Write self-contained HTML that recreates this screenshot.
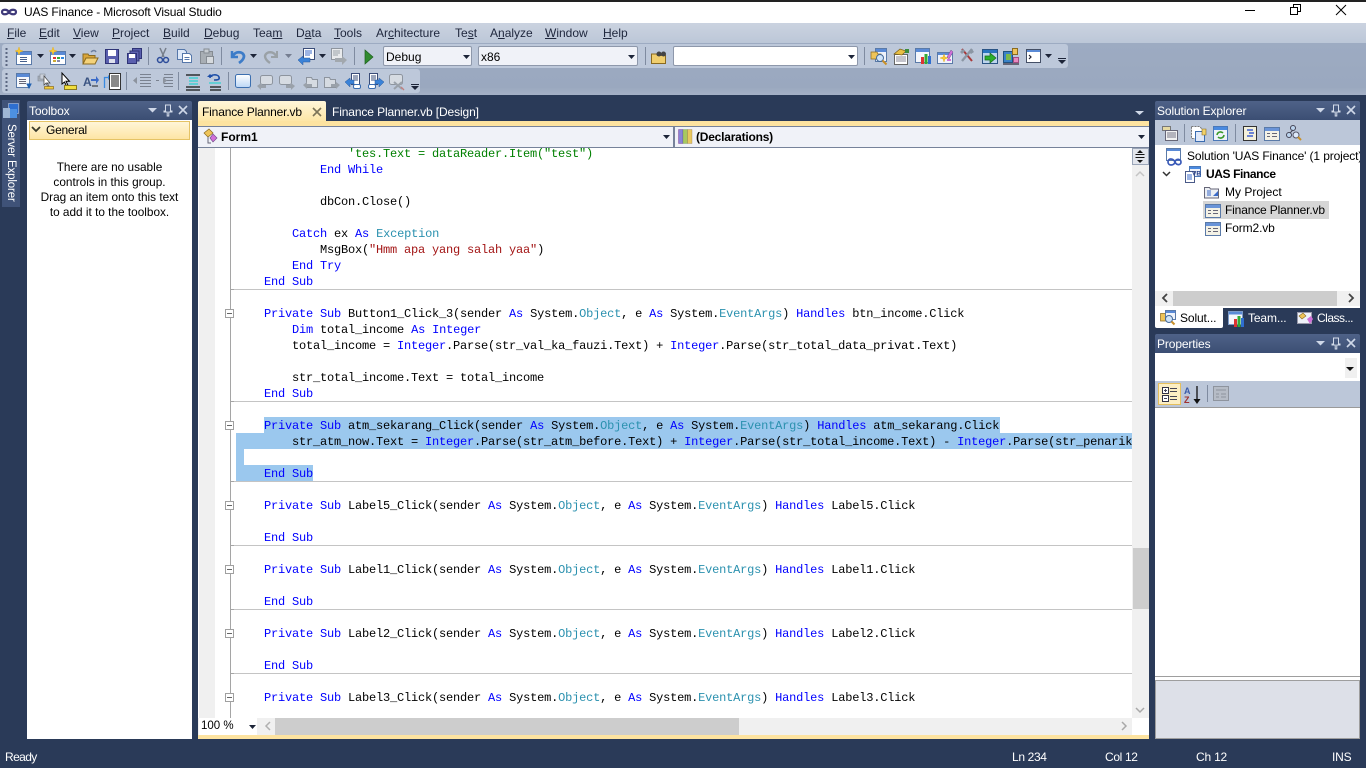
<!DOCTYPE html>
<html><head><meta charset="utf-8"><title>UAS Finance - Microsoft Visual Studio</title>
<style>
html,body{margin:0;padding:0;width:1366px;height:768px;overflow:hidden;background:#2a3a58}
body{position:relative;font:12px "Liberation Sans",sans-serif;color:#000}
.a,.t{position:absolute}
.t{white-space:pre;line-height:16px;letter-spacing:-.12px}
.w{color:#fff}
.m{color:#20283e;font-size:12px;top:25px;letter-spacing:0}
.st{letter-spacing:-.35px}
.hd{position:absolute;height:19px;background:linear-gradient(#4f6288,#3b4e73);border-radius:2px 2px 0 0}
.code{position:absolute;left:0;top:148px;width:1132px;height:570px;overflow:hidden;font:12px/16px "Liberation Mono",monospace;letter-spacing:-.2px;color:#000}
.l{position:absolute;left:264px;white-space:pre;height:16px;line-height:16px;margin-top:1px}
.k{color:#0000ff}.y{color:#2b91af}.s{color:#a31515}.c{color:#008000}
.sep{position:absolute;left:234px;width:898px;height:1px;background:#c4c4c4}
.fb{position:absolute;left:225px;width:7px;height:7px;border:1px solid #a0a0a0;background:#fff}
.fb:after{content:"";position:absolute;left:1px;top:3px;width:5px;height:1px;background:#666}
.sel{position:absolute;background:#9bc8ee}
.combo{position:absolute;background:#f0f2f8;border:1px solid #8e98ab;border-radius:2px;box-sizing:border-box;height:20px;line-height:20px;padding-left:2px;font-size:12px}
</style></head><body>
<!-- chrome -->
<div class="a" style="left:0;top:0;width:1366px;height:2px;background:#222"></div>
<div class="a" style="left:0;top:2px;width:1366px;height:21px;background:#fff"></div>
<div class="a" style="left:0;top:23px;width:1366px;height:20px;background:linear-gradient(#cbd3e0,#bcc7d8)"></div>
<div class="a" style="left:0;top:43px;width:1366px;height:52px;background:linear-gradient(#9dabc2,#9aa8bf 85%,#a5b1c6)"></div>
<div class="a" style="left:2px;top:44px;width:1066px;height:24px;background:#bdc8da;border-radius:3px"></div>
<div class="a" style="left:2px;top:69px;width:418px;height:24px;background:#bdc8da;border-radius:3px"></div>
<div class="t" style="left:24px;top:4px;font-size:12px;letter-spacing:-.15px">UAS Finance - Microsoft Visual Studio</div>

<div class="t m" style="left:7px"><u>F</u>ile</div>
<div class="t m" style="left:39px"><u>E</u>dit</div>
<div class="t m" style="left:73px"><u>V</u>iew</div>
<div class="t m" style="left:112px"><u>P</u>roject</div>
<div class="t m" style="left:163px"><u>B</u>uild</div>
<div class="t m" style="left:204px"><u>D</u>ebug</div>
<div class="t m" style="left:253px">Tea<u>m</u></div>
<div class="t m" style="left:296px">D<u>a</u>ta</div>
<div class="t m" style="left:334px"><u>T</u>ools</div>
<div class="t m" style="left:376px">Ar<u>c</u>hitecture</div>
<div class="t m" style="left:455px">Te<u>s</u>t</div>
<div class="t m" style="left:490px">A<u>n</u>alyze</div>
<div class="t m" style="left:545px"><u>W</u>indow</div>
<div class="t m" style="left:603px"><u>H</u>elp</div>

<div class="combo" style="left:383px;top:46px;width:89px">Debug</div>
<div class="combo" style="left:478px;top:46px;width:160px">x86</div>
<div class="combo" style="left:673px;top:46px;width:185px;background:#fff"></div>

<!-- server explorer -->
<div class="a" style="left:2px;top:100px;width:18px;height:107px;background:#3f5278"></div>
<div class="t w" style="left:3px;top:184px;width:100px;font-size:11.5px;letter-spacing:-.15px;transform-origin:0 0;transform:rotate(90deg) translate(-60px,-16px);">Server Explorer</div>

<!-- toolbox -->
<div class="hd" style="left:27px;top:101px;width:165px"></div>
<div class="a" style="left:27px;top:120px;width:165px;height:619px;background:#fff"></div>
<div class="t w" style="left:29px;top:103px">Toolbox</div>
<div class="a" style="left:29px;top:121px;width:159px;height:17px;background:linear-gradient(#fff6d8,#fde5a4);border:1px solid #e5c365"></div>
<div class="t" style="left:46px;top:122px;letter-spacing:-.25px">General</div>
<div class="a" style="left:27px;top:160px;width:165px;text-align:center;line-height:15px;font-size:11.8px">There are no usable<br>controls in this group.<br>Drag an item onto this text<br>to add it to the toolbox.</div>

<!-- editor tabs -->
<div class="a" style="left:198px;top:101px;width:128px;height:20px;background:linear-gradient(#fff6da,#fde6a6);border-radius:2px 2px 0 0"></div>
<div class="a" style="left:198px;top:121px;width:951px;height:5px;background:#fde3a0"></div>
<div class="t" style="left:202px;top:104px;letter-spacing:-.16px">Finance Planner.vb</div>
<div class="t w" style="left:332px;top:104px">Finance Planner.vb [Design]</div>

<!-- combo bar -->
<div class="a" style="left:198px;top:126px;width:951px;height:22px;background:#f0f2f8;border-top:1px solid #76829a;border-bottom:1px solid #76829a;box-sizing:border-box"></div>
<div class="a" style="left:673px;top:127px;width:2px;height:20px;background:#76829a"></div>
<div class="t" style="left:221px;top:129px;font-weight:bold;letter-spacing:0">Form1</div>
<div class="t" style="left:696px;top:129px;font-weight:bold;letter-spacing:-.22px">(Declarations)</div>

<!-- code -->
<div class="a" style="left:198px;top:148px;width:951px;height:587px;background:#fff"></div>
<div class="a" style="left:199px;top:148px;width:16px;height:570px;background:#f0f0f0"></div>
<div class="a" style="left:230px;top:148px;width:1px;height:570px;background:#a5a5a5"></div>
<div class="code" id="code">
<div class="sel" style="left:264px;top:269px;width:736px;height:16px"></div>
<div class="sel" style="left:236px;top:285px;width:896px;height:16px"></div>
<div class="sel" style="left:236px;top:301px;width:8px;height:16px"></div>
<div class="sel" style="left:236px;top:317px;width:77px;height:16px"></div>
<div class="l c" style="top:-3px">            'tes.Text = dataReader.Item("test")</div>
<div class="l" style="top:13px">        <span class="k">End While</span></div>
<div class="l" style="top:45px">        dbCon.Close()</div>
<div class="l" style="top:77px">    <span class="k">Catch</span> ex <span class="k">As</span> <span class="y">Exception</span></div>
<div class="l" style="top:93px">        MsgBox(<span class="s">"Hmm apa yang salah yaa"</span>)</div>
<div class="l" style="top:109px">    <span class="k">End Try</span></div>
<div class="l k" style="top:125px">End Sub</div>
<div class="l" style="top:157px"><span class="k">Private Sub</span> Button1_Click_3(sender <span class="k">As</span> System.<span class="y">Object</span>, e <span class="k">As</span> System.<span class="y">EventArgs</span>) <span class="k">Handles</span> btn_income.Click</div>
<div class="l" style="top:173px">    <span class="k">Dim</span> total_income <span class="k">As</span> <span class="k">Integer</span></div>
<div class="l" style="top:189px">    total_income = <span class="k">Integer</span>.Parse(str_val_ka_fauzi.Text) + <span class="k">Integer</span>.Parse(str_total_data_privat.Text)</div>
<div class="l" style="top:221px">    str_total_income.Text = total_income</div>
<div class="l k" style="top:237px">End Sub</div>
<div class="l" style="top:269px"><span class="k">Private Sub</span> atm_sekarang_Click(sender <span class="k">As</span> System.<span class="y">Object</span>, e <span class="k">As</span> System.<span class="y">EventArgs</span>) <span class="k">Handles</span> atm_sekarang.Click</div>
<div class="l" style="top:285px">    str_atm_now.Text = <span class="k">Integer</span>.Parse(str_atm_before.Text) + <span class="k">Integer</span>.Parse(str_total_income.Text) - <span class="k">Integer</span>.Parse(str_penarikan.Text)</div>
<div class="l k" style="top:317px">End Sub</div>
<div class="l" style="top:349px"><span class="k">Private Sub</span> Label5_Click(sender <span class="k">As</span> System.<span class="y">Object</span>, e <span class="k">As</span> System.<span class="y">EventArgs</span>) <span class="k">Handles</span> Label5.Click</div>
<div class="l k" style="top:381px">End Sub</div>
<div class="l" style="top:413px"><span class="k">Private Sub</span> Label1_Click(sender <span class="k">As</span> System.<span class="y">Object</span>, e <span class="k">As</span> System.<span class="y">EventArgs</span>) <span class="k">Handles</span> Label1.Click</div>
<div class="l k" style="top:445px">End Sub</div>
<div class="l" style="top:477px"><span class="k">Private Sub</span> Label2_Click(sender <span class="k">As</span> System.<span class="y">Object</span>, e <span class="k">As</span> System.<span class="y">EventArgs</span>) <span class="k">Handles</span> Label2.Click</div>
<div class="l k" style="top:509px">End Sub</div>
<div class="l" style="top:541px"><span class="k">Private Sub</span> Label3_Click(sender <span class="k">As</span> System.<span class="y">Object</span>, e <span class="k">As</span> System.<span class="y">EventArgs</span>) <span class="k">Handles</span> Label3.Click</div>
</div>
<div class="sep" style="top:289px"></div><div class="sep" style="top:401px"></div><div class="sep" style="top:481px"></div><div class="sep" style="top:545px"></div><div class="sep" style="top:609px"></div><div class="sep" style="top:673px"></div>
<div class="a" style="left:230px;top:289px;width:4px;height:1px;background:#a5a5a5"></div>
<div class="a" style="left:230px;top:401px;width:4px;height:1px;background:#a5a5a5"></div>
<div class="a" style="left:230px;top:481px;width:4px;height:1px;background:#a5a5a5"></div>
<div class="a" style="left:230px;top:545px;width:4px;height:1px;background:#a5a5a5"></div>
<div class="a" style="left:230px;top:609px;width:4px;height:1px;background:#a5a5a5"></div>
<div class="a" style="left:230px;top:673px;width:4px;height:1px;background:#a5a5a5"></div>
<div class="fb" style="top:309px"></div><div class="fb" style="top:421px"></div><div class="fb" style="top:501px"></div><div class="fb" style="top:565px"></div><div class="fb" style="top:629px"></div><div class="fb" style="top:693px"></div>

<!-- v scroll -->
<div class="a" style="left:1132px;top:148px;width:17px;height:570px;background:#f0f0f0"></div>
<div class="a" style="left:1132px;top:148px;width:17px;height:17px;background:#e2e5ec;border:1px solid #9aa5b8;box-sizing:border-box"></div>
<div class="a" style="left:1133px;top:548px;width:16px;height:61px;background:#cdcdcd"></div>
<!-- h scroll -->
<div class="a" style="left:198px;top:718px;width:934px;height:17px;background:#f0f0f0"></div>
<div class="a" style="left:199px;top:718px;width:58px;height:17px;background:#fff"></div>
<div class="t" style="left:201px;top:718px;font-size:11.5px;letter-spacing:0">100 %</div>
<div class="a" style="left:275px;top:718px;width:464px;height:17px;background:#cdcdcd"></div>
<div class="a" style="left:198px;top:735px;width:951px;height:4px;background:#fde3a0"></div>

<!-- solution explorer -->
<div class="hd" style="left:1155px;top:101px;width:205px"></div>
<div class="t w" style="left:1157px;top:103px">Solution Explorer</div>
<div class="a" style="left:1155px;top:120px;width:205px;height:25px;background:#bcc7d9"></div>
<div class="a" style="left:1155px;top:145px;width:205px;height:163px;background:#fff;overflow:hidden"></div>
<div class="a" style="left:1203px;top:201px;width:126px;height:18px;background:#d6d6d6"></div>
<div class="a" style="left:1155px;top:145px;width:205px;height:110px;overflow:hidden">
<div class="t" style="left:32px;top:3px">Solution 'UAS Finance' (1 project)</div>
<div class="t" style="left:51px;top:21px;font-weight:bold;letter-spacing:-.4px">UAS Finance</div>
<div class="t" style="left:70px;top:39px;letter-spacing:0">My Project</div>
<div class="t" style="left:70px;top:57px;letter-spacing:-.16px">Finance Planner.vb</div>
<div class="t" style="left:70px;top:75px">Form2.vb</div>
</div>
<div class="a" style="left:1155px;top:291px;width:205px;height:15px;background:#f0f0f0"></div>
<div class="a" style="left:1173px;top:291px;width:164px;height:15px;background:#cdcdcd"></div>
<div class="a" style="left:1155px;top:308px;width:68px;height:20px;background:#fff;border-radius:0 0 2px 2px"></div>
<div class="t" style="left:1180px;top:310px">Solut...</div>
<div class="t w" style="left:1248px;top:310px">Team...</div>
<div class="t w" style="left:1317px;top:310px;letter-spacing:-.5px">Class...</div>

<!-- properties -->
<div class="hd" style="left:1155px;top:334px;width:205px"></div>
<div class="t w" style="left:1157px;top:336px">Properties</div>
<div class="a" style="left:1155px;top:353px;width:205px;height:386px;background:#fff"></div>
<div class="a" style="left:1345px;top:358px;width:12px;height:20px;background:#f0f0f0"></div>
<div class="a" style="left:1155px;top:381px;width:205px;height:26px;background:#bcc7d9;border-bottom:1px solid #9a9a9a;box-sizing:content-box"></div>
<div class="a" style="left:1155px;top:676px;width:205px;height:1px;background:#9e9e9e"></div>
<div class="a" style="left:1155px;top:680px;width:203px;height:57px;background:#dde0e8;border:1px solid #9e9e9e"></div>

<!-- status -->
<div class="t w st" style="left:5px;top:749px;letter-spacing:-.6px">Ready</div>
<div class="t w st" style="left:1012px;top:749px">Ln 234</div>
<div class="t w st" style="left:1105px;top:749px">Col 12</div>
<div class="t w st" style="left:1196px;top:749px;letter-spacing:-.2px">Ch 12</div>
<div class="t w st" style="left:1332px;top:749px;letter-spacing:-.2px">INS</div>

<svg class="a" style="left:0;top:0" width="1366" height="768" viewBox="0 0 1366 768">
<defs>
<path id="dn" d="M0 0h7l-3.500 4z" fill="#1c2438"/>
<g id="star"><path d="M4 0l1 3 3 1-3 1-1 3-1-3-3-1 3-1z" fill="#f5c93a" stroke="#e8b020" stroke-width=".5"/></g>
<g id="win"><rect x=".5" y="2.500" width="15" height="13" fill="#fff" stroke="#5a7aa8"/><rect x="1" y="3" width="14" height="3" fill="#5a8ad6"/></g>
<g id="lines"><rect x=".5" y="2.500" width="15" height="13" fill="#f4f2e6" stroke="#5a7aa8"/><rect x="1" y="3" width="14" height="3" fill="#6a94d8"/><path d="M3 8.500h3M3 11.500h3M8 8.500h5M8 11.500h5" stroke="#667"/></g>
<g id="bub"><rect x="3.500" y="1.500" width="12" height="9" rx="2" fill="#d6dbe2" stroke="#8d949e"/><path d="M0 12l4-3v2h5v3h-5v2z" fill="#9aa1aa"/></g>
<g id="bub2"><rect x=".5" y="1.500" width="12" height="9" rx="2" fill="#d6dbe2" stroke="#8d949e"/><path d="M16 12l-4-3v2h-5v3h5v2z" fill="#9aa1aa"/></g>
<g id="fld"><path d="M3.500 3.500h5l1 2h5v8h-11z" fill="#d6dbe2" stroke="#8d949e"/><path d="M0 11l4-3v2h5v3h-5v2z" fill="#9aa1aa"/></g>
<g id="fld2"><path d="M.5 3.500h5l1 2h5v8h-11z" fill="#d6dbe2" stroke="#8d949e"/><path d="M16 11l-4-3v2h-5v3h5v2z" fill="#9aa1aa"/></g>
<g id="pin"><path d="M-2.500 0h5v6h1.500v1h-3.200v4h-1.600v-4h-3.200v-1h1.500z" fill="none" stroke="#d4dcea" stroke-width="1"/></g>
<g id="paneX"><path d="M0 0l8 8M8 0l-8 8" stroke="#cfd8e8" stroke-width="1.600"/></g>
<path id="paneDn" d="M0 0h9l-4.500 4.500z" fill="#cfd8e8"/>
<g id="dots"><path d="M6.500 0v2M6.500 4v2M6.500 8v2M6.500 12v2M6.500 16v2" stroke="#5a6680" stroke-width="2"/></g>
</defs>

<!-- logo -->
<path d="M7 12c0-3 5-3 7 0s7 3 7 0-5-3-7 0-7 3-7 0z" transform="translate(-5 0)" fill="none" stroke="#3f3a7a" stroke-width="2.200"/>
<!-- window controls -->
<path d="M1245 10.500h10" stroke="#000"/>
<path d="M1290.500 7.500h7v7h-7zM1293.500 7.500v-3h7v7h-3" fill="none" stroke="#000"/>
<path d="M1336 5l10 10M1346 5l-10 10" stroke="#000" stroke-width="1"/>

<!-- grips and separators -->
<use href="#dots" x="0" y="48"/><use href="#dots" x="0" y="73"/>
<path d="M148.500 47v18M221.500 47v18M354.500 47v18M645.500 47v18M864.500 47v18M126.500 72v18M178.500 72v18M228.500 72v18" stroke="#7f8ba0"/>

<!-- row 1 -->
<g transform="translate(16 49)"><use href="#win"/><path d="M4 8.500h7M4 10.500h7M4 12.500h7" stroke="#46608c"/><use href="#star" x="-1" y="-2"/></g>
<use href="#dn" x="37" y="54"/>
<g transform="translate(50 49)"><use href="#win"/><rect x="3" y="8" width="3" height="2" fill="#d33"/><rect x="7" y="8" width="3" height="2" fill="#3a3"/><rect x="11" y="8" width="3" height="2" fill="#38d"/><rect x="3" y="11" width="3" height="2" fill="#ca3"/><rect x="7" y="11" width="3" height="2" fill="#88a"/><use href="#star" x="-1" y="-2"/></g>
<use href="#dn" x="69" y="54"/>
<g transform="translate(82 48)"><path d="M1 16V6h5l1 1.500h6V16z" fill="#d9a53a" stroke="#8a6a20"/><path d="M1 16l3-6h12l-3 6z" fill="#f4d27a" stroke="#8a6a20"/><path d="M9 4c2-2 4-2 5 0" fill="none" stroke="#6d7fa0" stroke-width="1.400"/></g>
<g transform="translate(105 48)"><rect x=".5" y="1.500" width="13" height="14" fill="#5a5fae" stroke="#2f3476"/><rect x="3" y="2" width="8" height="6" fill="#fff"/><rect x="4" y="11" width="6" height="4" fill="#dfe2ee"/></g>
<g transform="translate(127 48)"><rect x="5.500" y=".5" width="9" height="10" fill="#5a5fae" stroke="#2f3476"/><rect x="3" y="3" width="9" height="10" fill="#5f64b0" stroke="#2f3476"/><rect x=".5" y="5.500" width="9" height="10" fill="#5a5fae" stroke="#2f3476"/><rect x="2" y="6" width="6" height="4" fill="#fff"/></g>
<g transform="translate(156 47)" fill="none"><path d="M4 1l4 9M10 1l-4 9" stroke="#767e8a" stroke-width="1.500"/><circle cx="4" cy="13" r="2.500" stroke="#2c4c9a" stroke-width="1.500"/><circle cx="10" cy="13" r="2.500" stroke="#2c4c9a" stroke-width="1.500"/></g>
<g transform="translate(177 48)"><path d="M.5 1.500h7l2 2v8h-9z" fill="#dde8f8" stroke="#5577aa"/><path d="M5.500 5.500h7l2 2v7h-9z" fill="#fff" stroke="#5577aa"/><path d="M7.500 9.500h5M7.500 11.500h5" stroke="#5577aa"/></g>
<g transform="translate(199 48)"><rect x="1.500" y="3.500" width="12" height="12" fill="#a8aeb4" stroke="#858b92"/><rect x="5" y="1" width="5" height="4" fill="#c8cdd2" stroke="#858b92"/><rect x="7.500" y="8.500" width="7" height="7" fill="#d6dade" stroke="#858b92"/></g>
<g transform="translate(230 48)"><path d="M2 3v6h6" fill="none" stroke="#3d7cc8" stroke-width="2.500"/><path d="M3 8c2-5 10-5 11 0 0 3-2 5-5 7" fill="none" stroke="#3d7cc8" stroke-width="2.800"/></g>
<use href="#dn" x="250" y="54"/>
<g transform="translate(263 48)"><path d="M14 3v6h-6" fill="none" stroke="#9aa1a6" stroke-width="2"/><path d="M13 8c-2-5-10-5-11 0 0 3 2 5 5 7" fill="none" stroke="#9aa1a6" stroke-width="2.400"/></g>
<use href="#dn" x="285" y="54" opacity=".45"/>
<g transform="translate(298 48)"><rect x="5.500" y=".5" width="11" height="11" fill="#fff" stroke="#3a4c78"/><path d="M7 3h7M7 5h7M7 7h5" stroke="#3a6ac8"/><path d="M0 12l5-4v2h7v4h-7v3z" fill="#3a82d8" stroke="#2a5a9c" stroke-width=".5"/></g>
<use href="#dn" x="319" y="54"/>
<g transform="translate(331 48)"><rect x=".5" y=".5" width="11" height="11" fill="#e8eaec" stroke="#8e959e"/><path d="M2 3h7M2 5h7M2 7h5" stroke="#9aa1a8"/><path d="M16 12l-5-4v2h-7v4h7v3z" fill="#a2a8ae"/></g>
<path d="M365 50l8 7-8 7z" fill="#2f8a2f" stroke="#1b5e1b" stroke-width=".7"/>
<path d="M463 55h7l-3.500 4zM628 55h7l-3.500 4zM848 55h7l-3.500 4z" fill="#1c2438"/>
<g transform="translate(651 49)"><path d="M.5 14.500V5h5l1 1.500h8v8z" fill="#f0ce6e" stroke="#8a6a20"/><circle cx="8" cy="5" r="2.500" fill="#444"/><circle cx="12.500" cy="5" r="2.500" fill="#444"/></g>
<g transform="translate(871 48)"><rect x="4.500" y=".5" width="11" height="13" fill="#eef2fa" stroke="#5a7aa8"/><rect x="5" y="1" width="10" height="3" fill="#5a8ad6"/><path d="M0 4h6l1 2h3v5H0z" fill="#eec45a" stroke="#8a6a20" stroke-width=".7"/><circle cx="9" cy="10" r="3.500" fill="#cfe4fa" stroke="#456a9a"/><path d="M11.500 12.500l4 4" stroke="#c9902a" stroke-width="2"/></g>
<g transform="translate(893 48)"><rect x="1.500" y="6.500" width="13" height="10" fill="#fff" stroke="#666"/><path d="M3 9h10M3 11h10M3 13h10" stroke="#889"/><path d="M1 6l6-5 6 2-4 4z" fill="#e8bf44" stroke="#7a5e18" stroke-width=".7"/><rect x="12" y="1" width="4" height="4" fill="#3c8c3c"/></g>
<g transform="translate(915 48)"><rect x=".5" y=".5" width="14" height="14" fill="#f4f6fb" stroke="#5a7aa8"/><rect x="1" y="1" width="13" height="3" fill="#5a8ad6"/><rect x="6" y="9" width="3" height="7" fill="#d33"/><rect x="9.500" y="6" width="3" height="10" fill="#3a3"/><rect x="13" y="8" width="3" height="8" fill="#2f6ed0"/></g>
<g transform="translate(937 49)"><rect x=".5" y="3.500" width="15" height="11" fill="#f0f3fa" stroke="#5a7aa8"/><rect x="1" y="4" width="14" height="2" fill="#5a8ad6"/><use href="#star" x="3" y="5"/><path d="M10 8l4-7 2 2-4 7z" fill="#d070d8" stroke="#74508c" stroke-width=".5"/><path d="M10 11h4" stroke="#d070d8" stroke-width="2"/></g>
<g transform="translate(959 48)"><path d="M3 1l10 12" stroke="#a83a3a" stroke-width="2"/><path d="M13 1l-10 12" stroke="#8b96a4" stroke-width="2.400"/><path d="M1 4l3-3 2 2-3 3zM15 4l-2-3-3 3 2 2z" fill="#8b96a4"/></g>
<g transform="translate(982 49)"><rect x=".5" y=".5" width="15" height="14" fill="#bcd4ee" stroke="#2a5484"/><rect x="1" y="1" width="14" height="3" fill="#2a74c0"/><path d="M3 7h5V4l6 5-6 5v-3H3z" fill="#2cb02c" stroke="#1a6a1a" stroke-width=".7"/></g>
<g transform="translate(1003 48)"><rect x=".5" y="3.500" width="9" height="11" fill="#3a82c8" stroke="#22527e"/><rect x="3" y="6" width="5" height="6" fill="#7ab84c"/><rect x="9.500" y=".5" width="5" height="6" fill="#eec45a" stroke="#8a6a20"/><rect x="10.500" y="9.500" width="5" height="5" fill="#e88ac0" stroke="#a04c80"/><rect x="0" y="15" width="16" height="2" fill="#667"/></g>
<g transform="translate(1026 49)"><rect x=".5" y=".5" width="14" height="13" fill="#fff" stroke="#444f66"/><rect x="1" y="1" width="13" height="2" fill="#5a8ad6"/><path d="M3 6l2 2-2 2" fill="none" stroke="#223" stroke-width="1.200"/></g>
<use href="#dn" x="1045" y="54"/>
<path d="M1058 58.500h8" stroke="#1c2438"/><path d="M1058 60h8l-4 4z" fill="#1c2438"/>

<!-- row 2 -->
<g transform="translate(16 73)"><rect x=".5" y=".5" width="13" height="14" fill="#f6f8fc" stroke="#5a7aa8"/><rect x="1" y="1" width="12" height="3" fill="#5a8ad6"/><path d="M3 6.500h7M3 8.500h7M3 10.500h7" stroke="#667"/><path d="M11 11h4l-2 4z" fill="#2060b0" stroke="#2060b0" stroke-width="1"/></g>
<g transform="translate(38 73)"><path d="M0 3h6v5H0z" fill="#a8b0bc" stroke="#7f8690" stroke-width=".6"/><path d="M2 1h5v5H2z" fill="#cad0da" stroke="#7f8690" stroke-width=".6"/><path d="M6 3v9l2-2 2 4 1-1-2-3h3z" fill="#fff" stroke="#444" stroke-width=".7"/><rect x="6.500" y="13.500" width="9" height="2.500" fill="#f1ce3e" stroke="#8a6a20" stroke-width=".7"/></g>
<g transform="translate(61 73)"><path d="M1 0v11l2.500-2 2 4 1.500-.7-2-4h3.500z" fill="#fff" stroke="#000" stroke-width="1"/><rect x="3.500" y="12.500" width="12" height="4" fill="#f1de3e" stroke="#8a7a20"/></g>
<g transform="translate(83 75)" font-family="Liberation Sans, sans-serif"><text x="0" y="11" font-size="12" font-weight="bold" fill="#3b5482">A</text><path d="M8 7h5V4l3 4-3 4V9H8z" fill="#3a6ac8" transform="translate(0 -3)"/><path d="M9 10h6" stroke="#222" transform="translate(0 1)"/></g>
<g transform="translate(104 73)"><path d="M.5 15V4.500H5" fill="none" stroke="#3a8ae0" stroke-width="1.300"/><path d="M4 2l3 2.500L4 7z" fill="#3a8ae0"/><rect x="5.500" y=".5" width="11" height="16" fill="#fff" stroke="#333"/><path d="M7 3h8M7 5h8M7 7h8M7 9h8M7 11h8M7 13h8" stroke="#111"/></g>
<path d="M134 80.500h3M140 74.500h11M140 77.500h11M140 80.500h11M140 83.500h11M140 86.500h11M156 80.500h3M164 74.500h9M164 77.500h9M164 80.500h9M164 83.500h9M164 86.500h9" stroke="#7a8290"/>
<path d="M137 77v7l-4-3.500zM163 77v7l4-3.500z" fill="#8c939e"/>
<path d="M186 75h14M186 87h14M186 90h14" stroke="#111" stroke-width="1.200"/><path d="M189 78h9M189 81h9M189 84h9" stroke="#2ad2d2" stroke-width="1.200"/>
<path d="M210 90h11M210 87h11" stroke="#111" stroke-width="1.200"/><path d="M209 83h12" stroke="#2ad2d2" stroke-width="1.200"/><path d="M210 78c0-4 8-4 9-1s-2 3-5 3" fill="none" stroke="#1e4fa8" stroke-width="1.600"/><path d="M207 77h6l-3-3z" fill="#1e4fa8"/>
<rect x="235.500" y="74.500" width="15" height="13" rx="2" fill="url(#g1)" stroke="#3c6fb0"/>
<linearGradient id="g1" x1="0" y1="0" x2="0" y2="1"><stop offset="0" stop-color="#fff"/><stop offset="1" stop-color="#bcd6f6"/></linearGradient>
<use href="#bub" x="257" y="74"/><use href="#bub2" x="279" y="74"/><use href="#fld" x="303" y="74"/><use href="#fld2" x="324" y="74"/>
<g transform="translate(345 73)"><rect x="6.500" y=".5" width="8" height="11" fill="#fff" stroke="#3a4c78"/><path d="M8 3h5M8 5h5M8 7h5" stroke="#3a4c78"/><path d="M0 9l5-4v2h4v4H5v3z" fill="#3a82d8" stroke="#2a5a9c" stroke-width=".5"/><rect x="8.500" y="11.500" width="7" height="4" rx="1.500" fill="#fff" stroke="#3a6cb0"/></g>
<g transform="translate(368 73)"><rect x="1.500" y=".5" width="8" height="11" fill="#fff" stroke="#3a4c78"/><path d="M3 3h5M3 5h5M3 7h5" stroke="#3a4c78"/><path d="M16 9l-5-4v2H7v4h4v3z" fill="#3a82d8" stroke="#2a5a9c" stroke-width=".5"/><rect x=".5" y="11.500" width="7" height="4" rx="1.500" fill="#fff" stroke="#3a6cb0"/></g>
<g transform="translate(389 73)"><rect x=".5" y="1.500" width="13" height="10" rx="2" fill="#d6dbe2" stroke="#8d949e"/><path d="M5 9l8 7M13 9l-8 7" stroke="#9aa1aa" stroke-width="2"/><path d="M12 14l3 3" stroke="#c08080" stroke-width="1.400"/></g>
<path d="M411 84.500h8" stroke="#1c2438"/><path d="M411 86h8l-4 4z" fill="#1c2438"/>

<!-- server explorer icon -->
<g transform="translate(3 103)"><rect x="5.500" y=".5" width="10" height="10" fill="#2e6fd0" stroke="#cfd8e8" stroke-width=".5"/><rect x="0" y="5" width="7" height="10" fill="#9fb6d4"/><rect x="7" y="6" width="7" height="9" fill="#4d90e0"/></g>

<!-- pane header buttons -->
<use href="#paneDn" x="148" y="108"/><use href="#pin" x="168" y="105"/><use href="#paneX" x="179" y="106"/>
<use href="#paneDn" x="1316" y="108"/><use href="#pin" x="1336" y="105"/><use href="#paneX" x="1347" y="106"/>
<use href="#paneDn" x="1316" y="341"/><use href="#pin" x="1336" y="338"/><use href="#paneX" x="1347" y="339"/>
<path d="M32 127l4 4 4-4" fill="none" stroke="#3a3a2a" stroke-width="1.800"/>

<!-- tab close, dropdown -->
<path d="M313 108l8 8M321 108l-8 8" stroke="#7c7458" stroke-width="1.600"/>
<path d="M1135 111h9l-4.500 4z" fill="#cfd8e8"/>

<!-- combo bar icons -->
<g transform="translate(204 128)"><path d="M0 5l5-4 4 4-5 4z" fill="#eec45a" stroke="#8a6a20" stroke-width=".7"/><path d="M9 6l4 4-4 4-3-4z" fill="#d070d8" stroke="#74508c" stroke-width=".7"/><path d="M4 9v6h3" fill="none" stroke="#667"/></g>
<g transform="translate(678 128)"><rect x=".5" y="1.500" width="4.500" height="14" fill="#8884d8" stroke="#606"  stroke-width=".3"/><rect x="5" y="1.500" width="4.500" height="14" fill="#a8c860" stroke="#585" stroke-width=".3"/><rect x="9.500" y="1.500" width="4.500" height="14" fill="#e8c860" stroke="#864" stroke-width=".3"/></g>
<path d="M663 135h7l-3.500 4zM1138 135h7l-3.500 4z" fill="#1c2438"/>

<!-- editor scrollbars -->
<path d="M1135.500 154.500h9M1135.500 157.500h9" stroke="#111"/><path d="M1140 150l3 3h-6zM1140 163l3-3h-6z" fill="#111"/>
<path d="M1136 176l4-4 4 4" fill="none" stroke="#c4c4c4" stroke-width="1.500"/>
<path d="M1136 708l4 4 4-4" fill="none" stroke="#a8a8a8" stroke-width="1.500"/>
<path d="M270 722l-4 4 4 4" fill="none" stroke="#b0b0b0" stroke-width="1.500"/>
<path d="M1122 722l4 4-4 4" fill="none" stroke="#a8a8a8" stroke-width="1.500"/>
<path d="M249 725h7l-3.500 4z" fill="#1c2438"/>

<!-- solution explorer toolbar -->
<g transform="translate(1162 125)"><path d="M.5 1.500h8v4h-8z" fill="#e6d9a2" stroke="#777"/><rect x="3.500" y="5.500" width="12" height="10" fill="#f2f2f2" stroke="#667"/><path d="M5 8h9M5 10h9M5 12h9" stroke="#778"/></g>
<path d="M1184.500 124v18M1235.500 124v18" stroke="#7f8ba0"/>
<g transform="translate(1191 126)"><path d="M.5 .5h8l3 3v9h-11z" fill="#fff" stroke="#777" stroke-dasharray="2 1"/><path d="M4.500 5.500h7l2 2v8h-9z" fill="#dfe8f8" stroke="#3a6cb0"/><path d="M11 3h4v6h-4z" fill="#f1d26a" stroke="#8a6a20" stroke-width=".6"/></g>
<g transform="translate(1213 126)"><rect x=".5" y=".5" width="14" height="14" fill="#eef2fa" stroke="#4a78b8"/><rect x="1" y="1" width="13" height="3" fill="#4a8ae0"/><path d="M4 9a3.500 3.500 0 0 1 6-2M11 9a3.500 3.500 0 0 1-6 2" fill="none" stroke="#3a9a2a" stroke-width="1.600"/></g>
<g transform="translate(1243 126)"><rect x=".5" y=".5" width="13" height="14" fill="#f4f1dc" stroke="#333"/><path d="M4 4h6M6 7h5M4 10h6" stroke="#1a44d0" stroke-width="1.200"/></g>
<g transform="translate(1264 125)"><use href="#lines"/></g>
<g transform="translate(1286 125)"><circle cx="7" cy="3" r="2.500" fill="#bcd4ee" stroke="#445"/><circle cx="3" cy="10" r="2.500" fill="#bcd4ee" stroke="#445"/><path d="M7 5l-3 3" stroke="#445"/><circle cx="10" cy="10" r="3" fill="#dfeafa" stroke="#556"/><path d="M12 12l3 3" stroke="#c9902a" stroke-width="2"/></g>

<!-- tree icons -->
<path d="M1163 172l3.500 3.500 3.500-3.500" fill="none" stroke="#333" stroke-width="1.500"/>
<g transform="translate(1166 148)"><rect x=".5" y=".5" width="14" height="12" fill="#fff" stroke="#5a7aa8"/><rect x="1" y="1" width="13" height="2" fill="#5a8ad6"/><path d="M2 14c0-4 5-4 7 0s6 3 6 0-5-4-6 0-7 4-7 0z" fill="none" stroke="#3a5ab8" stroke-width="1.700"/></g>
<g transform="translate(1185 166)"><rect x="4.500" y=".5" width="11" height="10" fill="#eef2fa" stroke="#4a78b8"/><rect x="5" y="1" width="10" height="2" fill="#4a8ae0"/><rect x=".5" y="5.500" width="9" height="11" fill="#fff" stroke="#4a5a88"/><text x="7" y="9.500" font-size="6.500" font-weight="bold" fill="#27408a" font-family="Liberation Sans, sans-serif">VB</text><path d="M2 9h5M2 11h5M2 13h5" stroke="#3a6ac8"/></g>
<g transform="translate(1204 185)"><path d="M.5 13V2.500h5l1 1.500h8v9z" fill="#eceff4" stroke="#667"/><path d="M3 6h4M3 8h4M3 10h4" stroke="#3a6ac8"/><path d="M9 11l5-5v5z" fill="#3a6ac8"/></g>
<g transform="translate(1205 202)"><use href="#lines"/></g>
<g transform="translate(1205 220)"><use href="#lines"/></g>

<!-- sol scrollbar -->
<path d="M1167 294l-4 4 4 4" fill="none" stroke="#444" stroke-width="1.800"/>
<path d="M1349 294l4 4-4 4" fill="none" stroke="#444" stroke-width="1.800"/>

<!-- bottom tab icons -->
<g transform="translate(1160 310)"><path d="M.5 3.500h6l1 1.500h3v6h-10z" fill="#eec45a" stroke="#8a6a20" stroke-width=".7"/><rect x="5.500" y=".5" width="10" height="9" fill="#f0f4fb" stroke="#5a7aa8"/><rect x="6" y="1" width="9" height="2" fill="#5a8ad6"/><circle cx="9" cy="9" r="3.500" fill="#cfe4fa" stroke="#456a9a"/><path d="M11.500 11.500l3 3" stroke="#c9902a" stroke-width="2"/></g>
<g transform="translate(1228 311)"><rect x=".5" y=".5" width="14" height="13" fill="#f4f6fb" stroke="#7a9ac8"/><rect x="1" y="1" width="13" height="2.500" fill="#5a8ad6"/><rect x="6" y="8" width="3" height="8" fill="#d33"/><rect x="9.500" y="5" width="3" height="11" fill="#3a3"/><rect x="13" y="7" width="3" height="9" fill="#2f6ed0"/></g>
<g transform="translate(1297 310)"><rect x=".5" y="2.500" width="14" height="11" fill="#eef2fa" stroke="#99a"/><path d="M2 6l4-3 3 3-4 3z" fill="#eec45a" stroke="#8a6a20" stroke-width=".6"/><path d="M10 9l4-3 2 3-3 5z" fill="#d070d8"/></g>

<!-- properties toolbar -->
<path d="M1346 367h8l-4 4z" fill="#111"/>
<rect x="1158.500" y="383.500" width="22" height="21" fill="#fbeec4" stroke="#e5bf5c"/>
<path d="M1162.500 387.500h6v6h-6zM1162.500 395.500h6v6h-6z" fill="#fff" stroke="#334"/><path d="M1164 390.500h3M1165.500 389v3M1164 398.500h3M1170 388.500h7M1170 391.500h7M1170 396.500h7M1170 399.500h7" stroke="#445"/>
<text x="1184" y="394" font-size="9" font-weight="bold" fill="#3a5aa8" font-family="Liberation Sans, sans-serif">A</text><text x="1184" y="403" font-size="9" font-weight="bold" fill="#a03030" font-family="Liberation Sans, sans-serif">Z</text>
<path d="M1197 386v15" stroke="#111" stroke-width="1.300"/><path d="M1193.500 399h7l-3.500 5z" fill="#111"/>
<path d="M1207.500 385v17" stroke="#7f8ba0"/>
<rect x="1213.500" y="386.500" width="15" height="14" fill="#b6bcc6" stroke="#8e949e"/><path d="M1216 390h10M1216 394h3M1221 394h5M1216 397h3M1221 397h5" stroke="#8e949e"/>
</svg>
</body></html>
